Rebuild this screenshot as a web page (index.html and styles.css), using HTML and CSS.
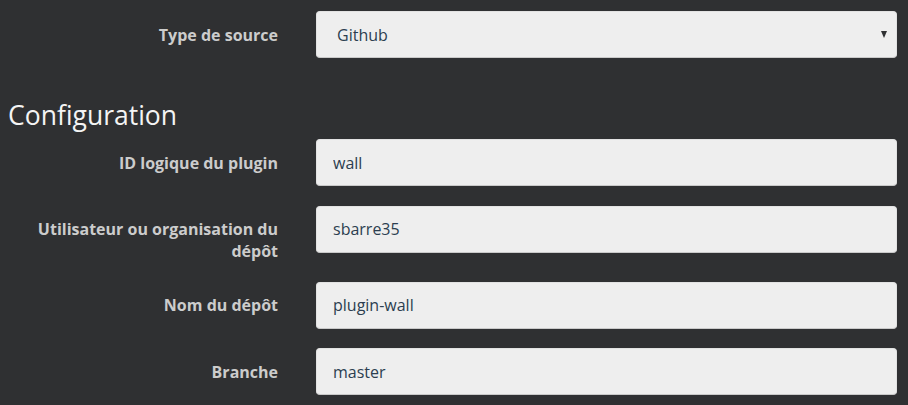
FILE: index.html
```html
<!DOCTYPE html>
<html lang="fr">
<head>
<meta charset="utf-8">
<title>Plugin</title>
<link rel="stylesheet" href="styles.css">
</head>
<body>
<form class="page">
  <div class="row">
    <label class="label" for="src">Type de source</label>
    <div class="select-wrap">
      <select id="src" class="control select">
        <option>Github</option>
      </select>
    </div>
  </div>

  <h3 class="section-title">Configuration</h3>

  <div class="rows">
    <div class="row">
      <label class="label" for="id">ID logique du plugin</label>
      <input id="id" class="control" type="text" value="wall">
    </div>
    <div class="row">
      <label class="label" for="user">Utilisateur ou organisation du dépôt</label>
      <input id="user" class="control" type="text" value="sbarre35">
    </div>
    <div class="row">
      <label class="label" for="repo">Nom du dépôt</label>
      <input id="repo" class="control" type="text" value="plugin-wall">
    </div>
    <div class="row">
      <label class="label" for="branch">Branche</label>
      <input id="branch" class="control" type="text" value="master">
    </div>
  </div>
</form>
</body>
</html>
```

FILE: styles.css
```css
html, body {
  margin: 0;
  padding: 0;
  background: #2f3032;
}

body {
  font-family: "Open Sans", "DejaVu Sans", sans-serif;
  color: #eeeeee;
  overflow: hidden;
}

.page {
  padding: 11px 11px 0 8px;
}

.rows {
  display: flex;
  flex-direction: column;
  gap: 19.5px;
}

.row {
  display: grid;
  grid-template-columns: 270px 1fr;
  column-gap: 38px;
  align-items: start;
}

.label {
  font-size: 16px;
  font-weight: 700;
  line-height: 22px;
  color: #cccccc;
  text-align: right;
  padding-top: 12.5px;
}

.control {
  box-sizing: border-box;
  width: 100%;
  height: 47px;
  margin: 0;
  padding: 0 16px;
  border: 1px solid #e2e2e2;
  border-bottom-color: #c9c9c9;
  border-radius: 4px;
  background: #eeeeee;
  font-family: "Open Sans", "DejaVu Sans", sans-serif;
  font-size: 16px;
  color: #2c3e50;
  outline: none;
}

.select-wrap {
  position: relative;
}

.select {
  appearance: none;
  -webkit-appearance: none;
  padding-left: 20px;
}

.select-wrap::after {
  content: "";
  position: absolute;
  right: 10px;
  top: 20px;
  width: 0;
  height: 0;
  border-left: 3.5px solid transparent;
  border-right: 3.5px solid transparent;
  border-top: 7px solid #2f3032;
  pointer-events: none;
}

.section-title {
  margin: 43px 0 10px;
  font-size: 26.5px;
  font-weight: 400;
  line-height: 28px;
  color: #f4f4f4;
}
```
